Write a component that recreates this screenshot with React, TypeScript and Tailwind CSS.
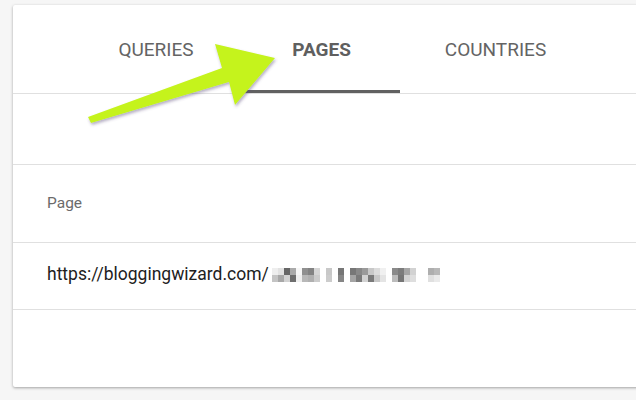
const tabs = [
  { label: "QUERIES", width: "w-[174px]", active: false },
  { label: "PAGES", width: "w-[157px]", active: true },
  { label: "COUNTRIES", width: "w-[191px]", active: false }
];

// pixelated (blurred) tail of the url: [top, bottom] grey per column
const pixels: [string, string][] = [
  ["#eeeeee", "#c4c4c4"],
  ["#e2e2e2", "#a8a8a8"],
  ["#666666", "#d2d2d2"],
  ["#aaaaaa", "#6e6e6e"],
  ["#f7f7f7", "#f0f0f0"],
  ["#909090", "#b8b8b8"],
  ["#838383", "#b0b0b0"],
  ["#d6d6d6", "#cccccc"],
  ["#ffffff", "#ffffff"],
  ["#c8c8c8", "#cccccc"],
  ["#ffffff", "#ffffff"],
  ["#767676", "#868686"],
  ["#ffffff", "#ffffff"],
  ["#777777", "#a4a4a4"],
  ["#888888", "#7a7a7a"],
  ["#9a9a9a", "#d2d2d2"],
  ["#c8c8c8", "#7a7a7a"],
  ["#dcdcdc", "#c8c8c8"],
  ["#f0f0f0", "#e4e4e4"],
  ["#ffffff", "#ffffff"],
  ["#8a8a8a", "#bcbcbc"],
  ["#7c7c7c", "#767676"],
  ["#a6a6a6", "#d4d4d4"],
  ["#d2d2d2", "#dedede"],
  ["#ffffff", "#ffffff"],
  ["#ffffff", "#ffffff"],
  ["#aeaeae", "#e0e0e0"],
  ["#b8b8b8", "#eaeaea"]
];

const Arrow = () => (
  <svg
    className="absolute inset-0 pointer-events-none"
    width="636"
    height="400"
    viewBox="0 0 636 400"
  >
    <defs>
      <filter id="arrowShadow" x="-20%" y="-20%" width="140%" height="140%">
        <feDropShadow dx="1" dy="2" stdDeviation="1.5" floodColor="#5a4a7a" floodOpacity="0.45" />
      </filter>
    </defs>
    <polygon
      points="88,117 222,68 215,44 275,58 235,105 229,82 91,123"
      fill="#c5f31b"
      filter="url(#arrowShadow)"
    />
  </svg>
);

export default function App() {
  return (
    <div className="relative w-[636px] h-[400px] overflow-hidden bg-[#f6f6f6] pt-[5px] pl-[13px] font-['Roboto',sans-serif]">
      <div className="w-[640px] h-[382px] bg-white rounded-[2px] shadow-[0_1px_3px_rgba(0,0,0,0.35)] flex flex-col">
        <div className="h-[89px] flex pl-[56px] border-b border-[#e0e0e0]">
          {tabs.map(({ label, width, active }) => (
            <div
              key={label}
              className={`${width} h-full flex items-center justify-center pt-[6px] ${
                active ? "border-b-[3px] border-[#616161]" : "border-b-[3px] border-transparent"
              }`}
            >
              <span
                className={`text-[19px] ${
                  active ? "font-bold text-[#5f5f5f]" : "font-normal text-[#646464]"
                }`}
              >
                {label}
              </span>
            </div>
          ))}
        </div>

        <div className="h-[71px] border-b border-[#e0e0e0]" />

        <div className="h-[78px] border-b border-[#e0e0e0] flex items-center pl-[34px]">
          <span className="text-[15.5px] text-[#6b6b6b]">Page</span>
        </div>

        <div className="h-[67px] border-b border-[#e0e0e0] flex items-center pl-[34px] pb-[4px]">
          <span className="text-[17.5px] text-[#212121]">https://bloggingwizard.com/</span>
          <div className="flex ml-[3px] mt-[2px]">
            {pixels.map(([top, bottom], i) => (
              <div key={i} className="flex flex-col">
                <div className="w-[6px] h-[7px]" style={{ backgroundColor: top }} />
                <div className="w-[6px] h-[7px]" style={{ backgroundColor: bottom }} />
              </div>
            ))}
          </div>
        </div>

        <div className="flex-1" />
      </div>
      <Arrow />
    </div>
  );
}
